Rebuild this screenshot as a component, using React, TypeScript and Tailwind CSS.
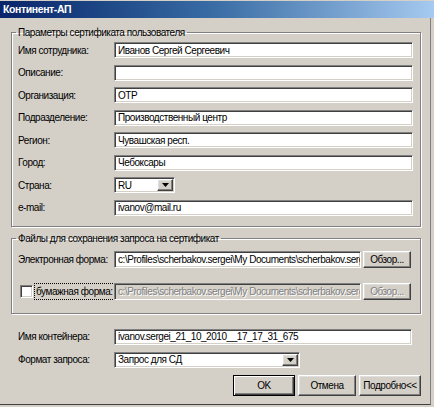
import React from "react";

const sunken =
  "border border-t-[#808080] border-l-[#808080] border-b-white border-r-white shadow-[inset_1px_1px_0_#404040,inset_-1px_-1px_0_#d4d0c8]";
const raised =
  "border border-t-white border-l-white border-b-[#404040] border-r-[#404040] shadow-[inset_-1px_-1px_0_#808080,inset_1px_1px_0_#dfdfdf]";
const etched = "border border-[#808080] shadow-[inset_1px_1px_0_#fff,1px_1px_0_#fff]";

function TextBox({ value = "", disabled = false, className = "" }: { value?: string; disabled?: boolean; className?: string }) {
  return (
    <div
      className={`${sunken} ${disabled ? "bg-[#d4d0c8] text-[#808080] [text-shadow:1px_1px_0_#fff]" : "bg-white text-black"} h-full flex items-center overflow-hidden whitespace-nowrap pl-[3px] ${className}`}
    >
      {value}
    </div>
  );
}

function Arrow() {
  return (
    <div className={`${raised} bg-[#d4d0c8] w-[16px] h-full flex items-center justify-center shrink-0`}>
      <svg width="7" height="4" viewBox="0 0 7 4">
        <polygon points="0,0 7,0 3.5,4" fill="#000" />
      </svg>
    </div>
  );
}

function Combo({ value, className = "" }: { value: string; className?: string }) {
  return (
    <div className={`${sunken} bg-white h-full flex items-stretch p-[1px] ${className}`}>
      <div className="flex-1 flex items-center pl-[2px] overflow-hidden whitespace-nowrap">{value}</div>
      <Arrow />
    </div>
  );
}

function Button({ label, primary = false, disabled = false, className = "" }: { label: string; primary?: boolean; disabled?: boolean; className?: string }) {
  const cls = primary
    ? "border border-black shadow-[inset_1px_1px_0_#fff,inset_-1px_-1px_0_#404040,inset_-2px_-2px_0_#808080]"
    : raised;
  return (
    <div
      className={`${cls} bg-[#d4d0c8] h-full flex items-center justify-center whitespace-nowrap shrink-0 ${disabled ? "text-[#808080] [text-shadow:1px_1px_0_#fff]" : "text-black"} ${className}`}
    >
      {label}
    </div>
  );
}

const userRows: [string, string][] = [
  ["Имя сотрудника:", "Иванов Сергей Сергеевич"],
  ["Описание:", ""],
  ["Организация:", "ОТР"],
  ["Подразделение:", "Производственный центр"],
  ["Регион:", "Чувашская респ."],
  ["Город:", "Чебоксары"],
];

// shown clipped at the box edge, as in the dialog
const path = "c:\\Profiles\\scherbakov.sergei\\My Documents\\scherbakov.serg";

export default function App() {
  return (
    <div
      className="w-[434px] h-[407px] bg-[#d4d0c8] flex flex-col text-[10px] tracking-[-0.45px] leading-[13px] text-black overflow-hidden"
      style={{ fontFamily: '"Liberation Sans", Arial, sans-serif' }}
    >
      <div className="mt-[1px] h-[17px] shrink-0 bg-linear-to-r from-[#0a246a] via-[#3a6ea5] to-[#a6caf0] flex items-center pl-[3px] text-white text-[10.5px] font-bold tracking-[-0.4px]">
        Континент-АП
      </div>

      <div className="flex-1 flex flex-col pl-[11px] pr-[9px] border-r border-b border-r-[#808080] border-b-[#404040] mr-[3px] mb-[2px]">
        <fieldset className={`${etched} mt-[8px] pl-[6px] pr-[7px] pt-[3px] pb-[10px]`}>
          <legend className="px-[2px] -ml-[2px] leading-[13px]">Параметры сертификата пользователя</legend>
          <div className="flex flex-col gap-[6.5px]">
            {userRows.map(([label, value]) => (
              <div key={label} className="flex items-center h-[16px]">
                <div className="w-[96px] shrink-0 whitespace-nowrap">{label}</div>
                <TextBox value={value} className="flex-1" />
              </div>
            ))}
            <div className="flex items-center h-[16px]">
              <div className="w-[96px] shrink-0">Страна:</div>
              <Combo value="RU" className="w-[61px]" />
            </div>
            <div className="flex items-center h-[16px]">
              <div className="w-[96px] shrink-0">e-mail:</div>
              <TextBox value="ivanov@mail.ru" className="flex-1" />
            </div>
          </div>
        </fieldset>

        <fieldset className={`${etched} mt-[5px] pl-[6px] pr-[7px] pt-[6px] pb-[13px]`}>
          <legend className="px-[2px] -ml-[2px] leading-[13px]">Файлы для сохранения запроса на сертификат</legend>
          <div className="flex flex-col gap-[15px]">
            <div className="flex items-center h-[17px]">
              <div className="w-[96px] shrink-0 whitespace-nowrap">Электронная форма:</div>
              <TextBox value={path} className="w-[247px] shrink-0" />
              <Button label="Обзор..." className="w-[48px] ml-[2px]" />
            </div>
            <div className="flex items-center h-[17px]">
              <div className="w-[96px] shrink-0 flex items-center whitespace-nowrap">
                <div className={`${sunken} bg-white w-[13px] h-[13px] ml-[2px] shrink-0`} />
                <div className="ml-[1px] px-[1px] h-[17px] flex items-center border border-dotted border-black">
                  бумажная форма:
                </div>
              </div>
              <TextBox value={path} disabled className="w-[247px] shrink-0" />
              <Button label="Обзор..." disabled className="w-[48px] ml-[2px]" />
            </div>
          </div>
        </fieldset>

        <div className="flex flex-col pl-[7px] pr-[9px] mt-[15px]">
          <div className="flex items-center h-[16px]">
            <div className="w-[96px] shrink-0 whitespace-nowrap">Имя контейнера:</div>
            <TextBox value="ivanov.sergei_21_10_2010__17_17_31_675" className="flex-1" />
          </div>
          <div className="flex items-center h-[16px] mt-[7px]">
            <div className="w-[96px] shrink-0 whitespace-nowrap">Формат запроса:</div>
            <Combo value="Запрос для СД" className="w-[186px]" />
          </div>
        </div>

        <div className="flex justify-end gap-[3px] h-[21px] mt-[7px]">
          <Button label="OK" primary className="w-[62px]" />
          <Button label="Отмена" className="w-[58px]" />
          <Button label="Подробно<<" className="w-[62px]" />
        </div>
      </div>
    </div>
  );
}
